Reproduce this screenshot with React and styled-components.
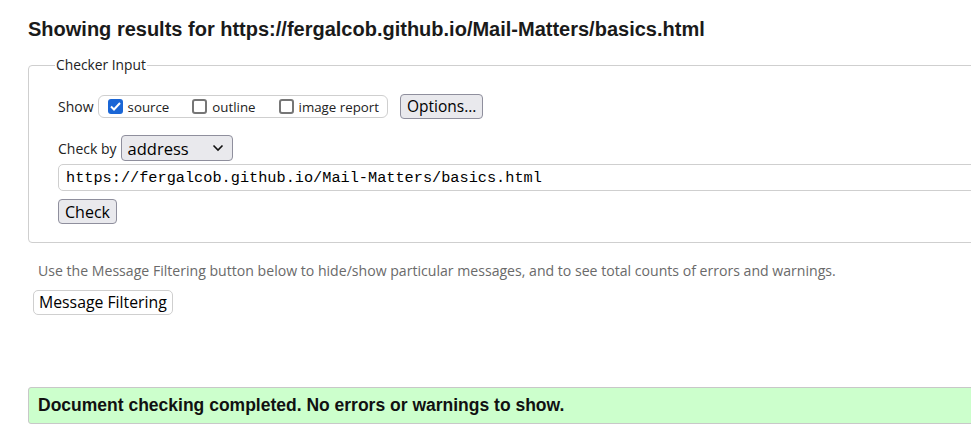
import React from "react";
import styled, { createGlobalStyle } from "styled-components";

const Global = createGlobalStyle`
  html, body { margin: 0; padding: 0; overflow: hidden; background: #fff; }
  body { font-family: "Open Sans", "Noto Sans", sans-serif; color: #000; }
`;

const Page = styled.div`
  width: 971px;
  height: 441px;
  overflow: hidden;
  padding-left: 28px;
  box-sizing: border-box;
`;

const Title = styled.h2`
  margin: 0;
  padding-top: 16px;
  font-family: "Liberation Sans", Arial, sans-serif;
  font-weight: 700;
  font-size: 20px;
  line-height: 26px;
  color: #1a1a1a;
  white-space: nowrap;
`;

const Fieldset = styled.fieldset`
  margin: 14px 0 0 0;
  width: 1000px;
  box-sizing: border-box;
  border: 1px solid #cfcfcf;
  border-radius: 4px;
  padding: 6px 29px 18px 29px;
`;

const Legend = styled.legend`
  font-size: 13.8px;
  color: #222;
  padding: 0 1px;
  margin-left: -3px;
  line-height: 18px;
`;

const Row = styled.div`
  display: flex;
  align-items: center;
  gap: ${(p) => p.gap || 4}px;
  margin-top: ${(p) => p.mt || 0}px;
`;

const Label = styled.span`
  font-size: 14px;
  color: #222;
  white-space: nowrap;
`;

const Group = styled.div`
  display: flex;
  align-items: center;
  height: 21px;
  border: 1px solid #cfcfcf;
  border-radius: 6px;
  padding: 0 8px 0 9px;
`;

const CheckItem = styled.label`
  display: flex;
  align-items: center;
  gap: 5px;
  font-size: 13.3px;
  color: #222;
  margin-right: ${(p) => p.mr || 0}px;
  white-space: nowrap;
`;

const Box = styled.span`
  width: 15px;
  height: 15px;
  box-sizing: border-box;
  border-radius: 3px;
  border: ${(p) => (p.checked ? "none" : "2px solid #767676")};
  background: ${(p) => (p.checked ? "#1a66d6" : "#fff")};
  display: inline-flex;
  align-items: center;
  justify-content: center;
`;

const GrayButton = styled.button`
  font-family: "Open Sans", "Noto Sans", sans-serif;
  font-size: ${(p) => p.fs || 15.5}px;
  height: ${(p) => p.h || 25}px;
  padding: 0 6px;
  background: #e9e9ed;
  border: 1px solid #8f8f9d;
  border-radius: 4px;
  color: #000;
  margin-left: ${(p) => p.ml || 0}px;
  line-height: 1;
`;

const Select = styled.div`
  width: 112px;
  height: 26px;
  box-sizing: border-box;
  border: 1px solid #8f8f9d;
  border-radius: 4px;
  background: #e9e9ed;
  display: flex;
  align-items: center;
  justify-content: space-between;
  padding: 0 8px 0 6px;
  font-size: 16.5px;
  color: #000;
`;

const UrlInput = styled.div`
  margin-top: 3px;
  height: 27px;
  box-sizing: border-box;
  border: 1px solid #cfcfcf;
  border-radius: 5px;
  display: flex;
  align-items: center;
  padding-left: 7px;
  font-family: "Liberation Mono", "DejaVu Sans Mono", monospace;
  font-size: 15.25px;
  color: #000;
  white-space: nowrap;
`;

const Note = styled.p`
  margin: 19px 0 0 10px;
  font-size: 14.1px;
  color: #6a6a6a;
  white-space: nowrap;
  line-height: 18px;
`;

const WhiteButton = styled.button`
  margin: 10px 0 0 5px;
  height: 25px;
  padding: 0 5px;
  background: #fff;
  border: 1px solid #cfcfcf;
  border-radius: 5px;
  font-family: "Open Sans", "Noto Sans", sans-serif;
  font-size: 15.8px;
  color: #000;
  line-height: 1;
`;

const Success = styled.div`
  margin-top: 72px;
  width: 1000px;
  height: 37px;
  box-sizing: border-box;
  background: #ccffcc;
  border: 1px solid #c8c8c8;
  border-radius: 3px;
  display: flex;
  align-items: center;
  padding-left: 9px;
  font-family: "Liberation Sans", Arial, sans-serif;
  font-weight: 700;
  font-size: 17.5px;
  color: #111;
  white-space: nowrap;
`;

const Check = () => (
  <svg width="11" height="9" viewBox="0 0 11 9">
    <path d="M1 4.5 L4 7.5 L10 1" fill="none" stroke="#fff" strokeWidth="2" />
  </svg>
);

const Chevron = () => (
  <svg width="12" height="8" viewBox="0 0 12 8">
    <path d="M1.5 1.5 L6 6 L10.5 1.5" fill="none" stroke="#111" strokeWidth="1.6" />
  </svg>
);

export default function App() {
  return (
    <Page>
      <Global />
      <Title>Showing results for https://fergalcob.github.io/Mail-Matters/basics.html</Title>
      <Fieldset>
        <Legend>Checker Input</Legend>
        <Row mt={14} gap={4}>
          <Label>Show</Label>
          <Group>
            <CheckItem mr={23}>
              <Box checked>
                <Check />
              </Box>
              source
            </CheckItem>
            <CheckItem mr={23}>
              <Box />
              outline
            </CheckItem>
            <CheckItem>
              <Box />
              image report
            </CheckItem>
          </Group>
          <GrayButton ml={8}>Options...</GrayButton>
        </Row>
        <Row mt={16} gap={4}>
          <Label>Check by</Label>
          <Select>
            address
            <Chevron />
          </Select>
        </Row>
        <UrlInput>https://fergalcob.github.io/Mail-Matters/basics.html</UrlInput>
        <Row mt={8}>
          <GrayButton fs={16}>Check</GrayButton>
        </Row>
      </Fieldset>
      <Note>
        Use the Message Filtering button below to hide/show particular messages, and to see total counts of errors and warnings.
      </Note>
      <WhiteButton>Message Filtering</WhiteButton>
      <Success>Document checking completed. No errors or warnings to show.</Success>
    </Page>
  );
}
